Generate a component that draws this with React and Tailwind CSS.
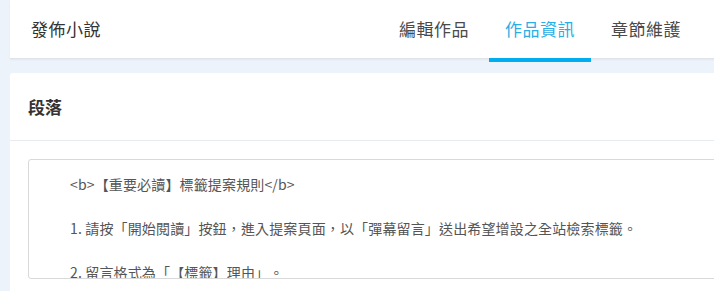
export default function App() {
  const font = { fontFamily: '"Noto Sans CJK TC", "Noto Sans", sans-serif' };
  return (
    <div
      className="w-[714px] h-[291px] overflow-hidden bg-[#edf3fb] pl-[10px] [text-spacing-trim:space-all]"
      style={font}
    >
      <div className="w-[740px] h-[59px] bg-white border-b border-[#dfe3e8] shadow-[0_1px_2px_rgba(0,0,0,0.05)] flex items-start justify-between pl-[21px] pr-[53px]">
        <div className="h-[58px] flex items-center text-[17px] tracking-[0.5px] text-[#333]">
          發佈小說
        </div>
        <div className="flex gap-[4px] h-[62px]">
          {[
            { label: "編輯作品", active: false },
            { label: "作品資訊", active: true },
            { label: "章節維護", active: false },
          ].map((t) => (
            <div key={t.label} className="w-[102px] flex flex-col">
              <div
                className={
                  t.active
                    ? "h-[58px] flex items-center justify-center text-[17px] tracking-[0.5px] text-[#2aaee6]"
                    : "h-[58px] flex items-center justify-center text-[17px] tracking-[0.5px] text-[#4a4a4a]"
                }
              >
                {t.label}
              </div>
              {t.active ? (
                <div className="h-[4px] bg-[#00aeef]" />
              ) : null}
            </div>
          ))}
        </div>
      </div>

      <div className="mt-[14px] w-[740px] h-[300px] bg-white rounded-t-[3px]">
        <div className="h-[68px] border-b border-[#e9ecef] flex items-center pl-[18px] text-[17px] font-semibold text-[#333]">
          段落
        </div>
        <div className="pl-[18px] pt-[18px]">
          <div className="h-[120px] border border-[#d9d9d9] rounded-[3px] pl-[41px] pt-[13px] text-[14px] leading-[22px] tracking-[0.15px] text-[#555] overflow-hidden whitespace-pre [text-spacing-trim:space-all]">
            <div>{"<b>【重要必讀】標籤提案規則</b>"}</div>
            <div>&nbsp;</div>
            <div>1. 請按「開始閱讀」按鈕，進入提案頁面，以「彈幕留言」送出希望增設之全站檢索標籤。</div>
            <div>&nbsp;</div>
            <div>2. 留言格式為「【標籤】理由」。</div>
          </div>
        </div>
      </div>
    </div>
  );
}
